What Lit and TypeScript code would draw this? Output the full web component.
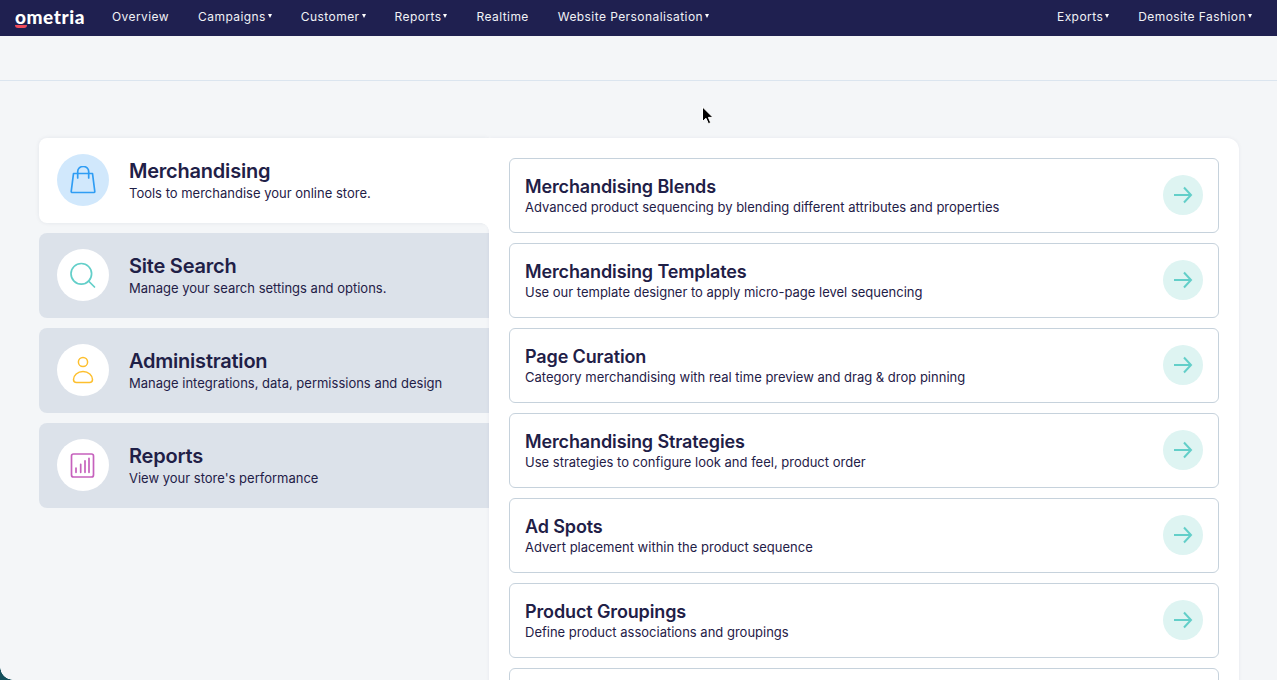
import { LitElement, html, css, svg } from "lit";
import { customElement } from "lit/decorators.js";

const tabs = [
  {
    title: "Merchandising",
    text: "Tools to merchandise your online store.",
    active: true,
    icon: svg`<g fill="none" stroke="#2f9df4" stroke-width="1.7" stroke-linecap="round" stroke-linejoin="round">
      <path d="M4.500 7.500h19l2.300 18a1 1 0 0 1-1 1H3.200a1 1 0 0 1-1-1z" />
      <path d="M8.700 12V5.500a5.500 5 0 0 1 11 0V12" />
    </g>`,
  },
  {
    title: "Site Search",
    text: "Manage your search settings and options.",
    icon: svg`<g fill="none" stroke="#63cfc9" stroke-width="1.7" stroke-linecap="round">
      <circle cx="12.300" cy="12.800" r="10.300" />
      <path d="M19.500 20l6 6" />
    </g>`,
  },
  {
    title: "Administration",
    text: "Manage integrations, data, permissions and design",
    icon: svg`<g fill="none" stroke="#fdbf2d" stroke-width="1.500" stroke-linejoin="round">
      <circle cx="14" cy="6" r="4.600" />
      <path d="M14 15.500c-5.500 0-9.500 4-9.500 8 0 2 1 3 3 3h13c2 0 3-1 3-3 0-4-4-8-9.500-8z" />
    </g>`,
  },
  {
    title: "Reports",
    text: "View your store's performance",
    icon: svg`<g fill="none" stroke="#c661bd" stroke-width="1.7" stroke-linecap="round">
      <rect x="2.500" y="3" width="22" height="23" rx="2" />
      <path d="M7 21.300v-4.300M11.700 21.300v-8M16 21.300V9.800M20 21.300V7.300" />
    </g>`,
  },
];

const links = [
  ["Merchandising Blends", "Advanced product sequencing by blending different attributes and properties"],
  ["Merchandising Templates", "Use our template designer to apply micro-page level sequencing"],
  ["Page Curation", "Category merchandising with real time preview and drag & drop pinning"],
  ["Merchandising Strategies", "Use strategies to configure look and feel, product order"],
  ["Ad Spots", "Advert placement within the product sequence"],
  ["Product Groupings", "Define product associations and groupings"],
  ["", ""],
];

@customElement("app-root")
export class AppRoot extends LitElement {
  static styles = css`
    :host {
      display: block;
      position: relative;
      height: 680px;
      overflow: hidden;
      background: #f4f6f8;
      font-family: Inter, "Liberation Sans", sans-serif;
      color: #1f2047;
    }

    nav {
      height: 36px;
      box-sizing: border-box;
      padding: 0 25px 3px 15px;
      background: #1f2050;
      display: flex;
      align-items: center;
      color: #f1f2f6;
      font-size: 12px;
      letter-spacing: 0.43px;
    }

    .logo {
      position: relative;
      width: 70px;
      margin-right: 27px;
      font-family: Lato, "Liberation Sans", sans-serif;
      font-size: 19px;
      font-weight: 900;
      letter-spacing: 0.55px;
      color: #fff;
      line-height: 30px;
    }

    .logo span {
      position: absolute;
      left: 0;
      top: 23px;
      width: 12px;
      height: 3px;
      border-radius: 0 0 6px 6px;
      background: #ef4b5b;
    }

    .item {
      margin-right: 29px;
      white-space: nowrap;
    }

    .item.menu::after {
      content: "";
      display: inline-block;
      margin-left: 2px;
      vertical-align: 3px;
      border-left: 2.5px solid transparent;
      border-right: 2.5px solid transparent;
      border-top: 4px solid #fff;
    }

    .spacer {
      flex: 1;
    }

    .item.last {
      margin-right: 0;
    }

    .subbar {
      height: 44px;
      border-bottom: 1px solid #dbe5ef;
    }

    main {
      display: flex;
      padding: 57px 38px 0 39px;
    }

    .tabs {
      width: 450px;
      flex-shrink: 0;
      display: flex;
      flex-direction: column;
      gap: 10px;
    }

    .tab {
      height: 85px;
      box-sizing: border-box;
      display: flex;
      align-items: center;
      gap: 20px;
      padding: 0 0 1px 18px;
      background: #dce2ea;
      border-radius: 8px 0 0 8px;
    }

    .tab.active {
      background: #fff;
      box-shadow: 0 0 4px rgba(31, 32, 80, 0.08);
      clip-path: inset(-6px 0 -12px -6px);
      position: relative;
      z-index: 1;
    }

    /* rounds the gap under the active tab into the panel */
    .tab.active::after {
      content: "";
      position: absolute;
      right: 0;
      top: 100%;
      width: 8px;
      height: 8px;
      background: radial-gradient(circle at 0 100%, transparent 7.5px, #fff 8px);
    }

    .badge {
      width: 52px;
      height: 52px;
      border-radius: 50%;
      background: #fff;
      display: flex;
      align-items: center;
      justify-content: center;
      flex-shrink: 0;
    }

    .tab.active .badge {
      background: #d1e8fc;
    }

    .badge svg {
      width: 28px;
      height: 28px;
    }

    .tab h2 {
      margin: 0;
      font-size: 20px;
      line-height: 24px;
      font-weight: 600;
      letter-spacing: -0.22px;
    }

    .tab p {
      margin: 2px 0 0;
      font-size: 13px;
      line-height: 16px;
    }

    .panel {
      flex: 1;
      background: #fff;
      border-radius: 0 12px 0 0;
      padding: 20px;
      display: flex;
      flex-direction: column;
      gap: 10px;
      box-shadow: 0 0 4px rgba(31, 32, 80, 0.06);
    }

    .card {
      height: 75px;
      flex-shrink: 0;
      box-sizing: border-box;
      border: 1px solid #c6d2dc;
      border-radius: 6px;
      display: flex;
      align-items: center;
      justify-content: space-between;
      padding: 0 15px;
    }

    .card h3 {
      margin: 0;
      font-size: 18px;
      line-height: 22px;
      font-weight: 600;
      letter-spacing: -0.13px;
    }

    .card p {
      margin: 1px 0 0;
      font-size: 13px;
      line-height: 16px;
    }

    .go {
      width: 40px;
      height: 40px;
      margin-top: -1px;
      border-radius: 50%;
      background: #def4f2;
      display: flex;
      align-items: center;
      justify-content: center;
    }

    .go svg {
      width: 20px;
      height: 20px;
    }

    .corner {
      position: absolute;
      left: 0;
      bottom: 0;
      width: 13px;
      height: 13px;
      background: radial-gradient(circle at 100% 0, transparent 12.5px, #14505c 13px);
    }

    .cursor {
      position: absolute;
      left: 701px;
      top: 106px;
      width: 14px;
      height: 20px;
    }
  `;

  render() {
    return html`
      <nav>
        <div class="logo">ometria<span></span></div>
        <div class="item">Overview</div>
        <div class="item menu">Campaigns</div>
        <div class="item menu">Customer</div>
        <div class="item menu">Reports</div>
        <div class="item">Realtime</div>
        <div class="item menu">Website Personalisation</div>
        <div class="spacer"></div>
        <div class="item menu">Exports</div>
        <div class="item menu last">Demosite Fashion</div>
      </nav>
      <div class="subbar"></div>
      <main>
        <div class="tabs">
          ${tabs.map(
            (t) => html`
              <div class="tab ${t.active ? "active" : ""}">
                <div class="badge"><svg viewBox="0 0 28 28">${t.icon}</svg></div>
                <div>
                  <h2>${t.title}</h2>
                  <p>${t.text}</p>
                </div>
              </div>
            `,
          )}
        </div>
        <div class="panel">
          ${links.map(
            ([title, text]) => html`
              <div class="card">
                <div>
                  <h3>${title}</h3>
                  <p>${text}</p>
                </div>
                ${title
                  ? html`<div class="go">
                      <svg viewBox="0 0 20 20" fill="none" stroke="#63cfc9" stroke-width="2">
                        <path d="M1 10h17M11 2.500 18 10 11 17.500" />
                      </svg>
                    </div>`
                  : ""}
              </div>
            `,
          )}
        </div>
      </main>
      <div class="corner"></div>
      <svg class="cursor" viewBox="0 0 14 20">
        <path d="M1.500 1v14.500l3.500-3.200 2.400 5.400 2.300-1-2.300-5.300h4.600z" fill="#000" stroke="#fff" stroke-width="1" />
      </svg>
    `;
  }
}
